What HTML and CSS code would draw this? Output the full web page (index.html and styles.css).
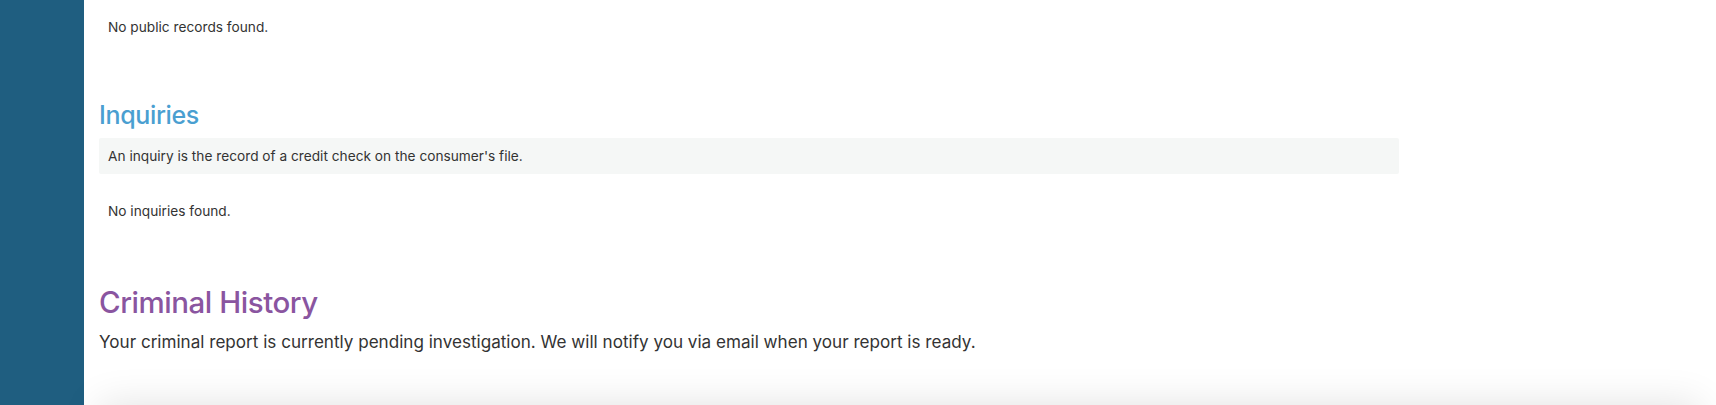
FILE: index.html
```html
<!DOCTYPE html>
<html lang="en">
<head>
<meta charset="utf-8">
<title>Report</title>
<link rel="stylesheet" href="styles.css">
</head>
<body>
<div class="layout">
  <aside class="sidebar"></aside>
  <main class="main">
    <div class="content">
      <div class="note">No public records found.</div>

      <section class="section">
        <h3 class="section-title section-title--blue">Inquiries</h3>
        <div class="info-box">An inquiry is the record of a credit check on the consumer's file.</div>
        <div class="note note--after-box">No inquiries found.</div>
      </section>

      <section class="section">
        <h2 class="section-title section-title--purple">Criminal History</h2>
        <p class="lead">Your criminal report is currently pending investigation. We will notify you via email when your report is ready.</p>
      </section>
    </div>
    <footer class="footer"></footer>
  </main>
</div>
</body>
</html>
```

FILE: styles.css
```css
html, body {
  margin: 0;
  padding: 0;
  background: #ffffff;
}

body {
  font-family: Inter, "Noto Sans", "Liberation Sans", sans-serif;
  color: #333333;
}

.layout {
  display: flex;
  height: 405px;
  overflow: hidden;
}

.sidebar {
  flex: 0 0 84px;
  background: #1f5e80;
}

.main {
  flex: 1 1 auto;
  padding-top: 7px;
  padding-left: 15px;
  min-width: 0;
}

.content {
  width: 1300px;
}

.note {
  padding: 10px 10px 10px 9px;
  font-size: 13.7px;
  line-height: 20px;
}

.note--after-box {
  margin-top: 17px;
}

.section {
  margin-top: 53px;
}

.section-title {
  margin: 0;
  font-weight: 500;
}

.section-title--blue {
  color: #4a9fd1;
  font-size: 25px;
  line-height: 30px;
  letter-spacing: -0.35px;
}

.section-title--purple {
  color: #8a55a0;
  font-size: 29.5px;
  line-height: 36px;
  letter-spacing: -0.45px;
}

.info-box {
  margin-top: 8px;
  padding: 8px 9px;
  background: #f5f7f6;
  border-radius: 2px;
  font-size: 13.7px;
  line-height: 20px;
}

.lead {
  margin: 10px 0 0;
  font-size: 17.1px;
  line-height: 24px;
}

.footer {
  margin-top: 51px;
  margin-right: 16px;
  height: 60px;
  background: #ffffff;
  box-shadow: 0 0 40px rgba(0, 0, 0, 0.12);
}
```
